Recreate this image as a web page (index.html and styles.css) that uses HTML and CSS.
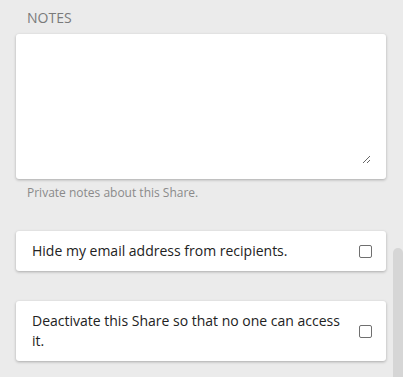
FILE: index.html
```html
<!DOCTYPE html>
<html>
<head>
<meta charset="utf-8">
<link rel="stylesheet" href="styles.css">
</head>
<body>
<div class="panel">
  <div class="field">
    <label class="label" for="notes">NOTES</label>
    <div class="card textarea-card">
      <textarea id="notes" class="notes"></textarea>
    </div>
    <div class="help">Private notes about this Share.</div>
  </div>
  <label class="card check-card one">
    <span class="check-text">Hide my email address from recipients.</span>
    <input type="checkbox" class="check">
  </label>
  <label class="card check-card two">
    <span class="check-text">Deactivate this Share so that no one can access it.</span>
    <input type="checkbox" class="check">
  </label>
</div>
<div class="scrollbar"></div>
</body>
</html>
```

FILE: styles.css
```css
html, body {
  margin: 0;
  padding: 0;
  height: 100%;
  overflow: hidden;
}
body {
  background: #ebebeb;
  font-family: "Open Sans", "Liberation Sans", sans-serif;
  color: #222;
}
.panel {
  padding: 8px 17px 0 16px;
  display: flex;
  flex-direction: column;
}
.label {
  display: block;
  font-size: 14px;
  color: #7a7a7a;
  padding-left: 11px;
  line-height: 19px;
  margin-bottom: 7px;
}
.card {
  background: #fff;
  border-radius: 3px;
  box-shadow: 0 1px 3px rgba(0,0,0,0.28);
}
.textarea-card {
  height: 145px;
  display: flex;
  box-sizing: border-box;
  padding: 10px 15px 15px 12px;
}
.notes {
  flex: 1;
  border: none;
  outline: none;
  background: transparent;
  resize: vertical;
  margin: 0;
  padding: 0;
  font: inherit;
}
.help {
  font-size: 12px;
  color: #8a8a8a;
  padding-left: 11px;
  margin-top: 5px;
  line-height: 17px;
}
.check-card {
  display: flex;
  align-items: center;
  padding: 0 14px 0 16px;
  font-size: 14px;
  line-height: 20px;
}
.check-card.one {
  margin-top: 30px;
  height: 40px;
}
.check-card.two {
  margin-top: 30px;
  height: 60px;
}
.check-text {
  flex: 1;
  padding-right: 14px;
}
.check {
  appearance: none;
  -webkit-appearance: none;
  width: 13px;
  height: 13px;
  margin: 0;
  border: 1px solid #6f6f6f;
  border-radius: 2px;
  background: #fff;
  box-sizing: border-box;
  flex: none;
}
.scrollbar {
  position: absolute;
  right: 0;
  top: 248px;
  width: 10px;
  height: 140px;
  background: #d6d6d6;
  border-radius: 5px 5px 0 0;
}
```
